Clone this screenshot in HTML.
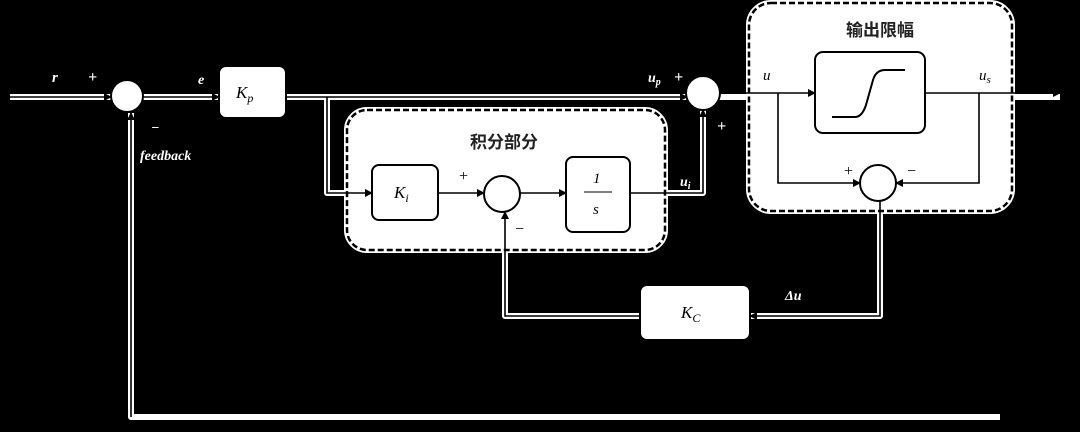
<!DOCTYPE html>
<html><head><meta charset="utf-8"><style>
html,body{margin:0;padding:0;background:#000;width:1080px;height:432px;overflow:hidden}
svg{display:block}
text{font-family:"Liberation Serif",serif;font-style:italic;fill:#000}
.cn{font-family:"Liberation Sans","Noto Sans CJK SC",sans-serif;font-style:normal;font-weight:bold;font-size:17px;fill:#222}
.w{fill:#fff;font-family:"Liberation Serif",serif;font-style:italic;font-weight:bold}
</style></head><body>
<svg width="1080" height="432" viewBox="0 0 1080 432" xmlns="http://www.w3.org/2000/svg">
<defs>
<marker id="a" markerWidth="8" markerHeight="8" refX="7" refY="4" orient="auto" markerUnits="userSpaceOnUse"><path d="M0,0 L8,4 L0,8 Z" fill="#000"/></marker>
</defs>
<g fill="none" stroke="#fff" stroke-width="6" stroke-linejoin="round">
<path d="M10,97 L1060,97"/>
<path d="M327,97 L327,193 L372,193"/>
<path d="M630,193 L703,193 L703,110"/>
<path d="M131,113 L131,417 L1000,417"/>
<path d="M880,200 L880,316 L750,316"/>
<path d="M640,316 L505,316 L505,212"/>
</g>
<rect x="347" y="110" width="318" height="140" rx="20" fill="#fff" stroke="#fff" stroke-width="6"/>
<rect x="749" y="3" width="263" height="208" rx="22" fill="#fff" stroke="#fff" stroke-width="6"/>
<rect x="347" y="110" width="318" height="140" rx="20" fill="#fff" stroke="#000" stroke-width="2.5" stroke-dasharray="6,3"/>
<rect x="749" y="3" width="263" height="208" rx="22" fill="#fff" stroke="#000" stroke-width="2.5" stroke-dasharray="6,3"/>
<g fill="none" stroke="#000" stroke-width="1.6">
<path d="M10,97 L111,97" marker-end="url(#a)"/>
<path d="M143,97 L219,97" marker-end="url(#a)"/>
<path d="M286,97 L687,97" marker-end="url(#a)"/>
<path d="M327,97 L327,193 L372,193" marker-end="url(#a)"/>
<path d="M438,193 L484,193" marker-end="url(#a)"/>
<path d="M520,193 L566,193" marker-end="url(#a)"/>
<path d="M630,193 L703,193 L703,110" marker-end="url(#a)"/>
<path d="M719,93 L815,93" marker-end="url(#a)"/>
<path d="M925,93 L1060,93" marker-end="url(#a)"/>
<path d="M778,93 L778,183 L860,183" marker-end="url(#a)"/>
<path d="M979,93 L979,183 L896,183" marker-end="url(#a)"/>
<path d="M880,201 L880,316 L750,316" marker-end="url(#a)"/>
<path d="M640,316 L505,316 L505,212" marker-end="url(#a)"/>
<path d="M131,417 L131,113" marker-end="url(#a)"/>
</g>
<g fill="#fff" stroke="#000" stroke-width="2">
<rect x="219" y="66" width="67" height="52" rx="7"/>
<rect x="372" y="165" width="66" height="55" rx="7"/>
<rect x="566" y="157" width="64" height="75" rx="7"/>
<rect x="815" y="52" width="110" height="81" rx="8"/>
<rect x="640" y="285" width="110" height="55" rx="7"/>
<circle cx="127" cy="96" r="16"/>
<circle cx="502" cy="194" r="18"/>
<circle cx="703" cy="93" r="17"/>
<circle cx="878" cy="183" r="18"/>
</g>
<path d="M832,117 L855,117 Q862,117 866,105 L873,80 Q876,70 885,70 L905,70" fill="none" stroke="#000" stroke-width="2"/>
<text x="236" y="98" font-size="17">K<tspan font-size="12" dy="4">p</tspan></text>
<text x="394" y="198" font-size="17">K<tspan font-size="12" dy="4">i</tspan></text>
<text x="593" y="183" font-size="15" font-style="normal">1</text>
<line x1="584" y1="192" x2="612" y2="192" stroke="#000" stroke-width="1"/>
<text x="593" y="214" font-size="15">s</text>
<text x="681" y="318" font-size="17">K<tspan font-size="12" dy="4">C</tspan></text>
<text class="cn" x="470" y="148">积分部分</text>
<text class="cn" x="846" y="36">输出限幅</text>
<text x="458" y="181" font-size="16" font-style="normal">+</text>
<text x="514" y="234" font-size="16" font-style="normal">−</text>
<text x="763" y="80" font-size="15">u</text>
<text x="979" y="80" font-size="15">u<tspan font-size="11" dy="3">s</tspan></text>
<text x="843" y="176" font-size="16" font-style="normal">+</text>
<text x="906" y="176" font-size="16" font-style="normal">−</text>
<text class="w" x="52" y="82" font-size="15">r</text>
<text class="w" x="88" y="82" font-size="16" font-style="normal">+</text>
<text class="w" x="198" y="84" font-size="14">e</text>
<text class="w" x="151" y="132" font-size="14" font-style="normal">−</text>
<text class="w" x="140" y="160" font-size="14">feedback</text>
<text class="w" x="648" y="82" font-size="14">u<tspan font-size="10" dy="3">p</tspan></text>
<text class="w" x="674" y="82" font-size="16" font-style="normal">+</text>
<text class="w" x="717" y="131" font-size="16" font-style="normal">+</text>
<text class="w" x="680" y="186" font-size="14">u<tspan font-size="10" dy="3">i</tspan></text>
<text class="w" x="785" y="300" font-size="14" font-style="normal">Δu</text>
</svg>
</body></html>
